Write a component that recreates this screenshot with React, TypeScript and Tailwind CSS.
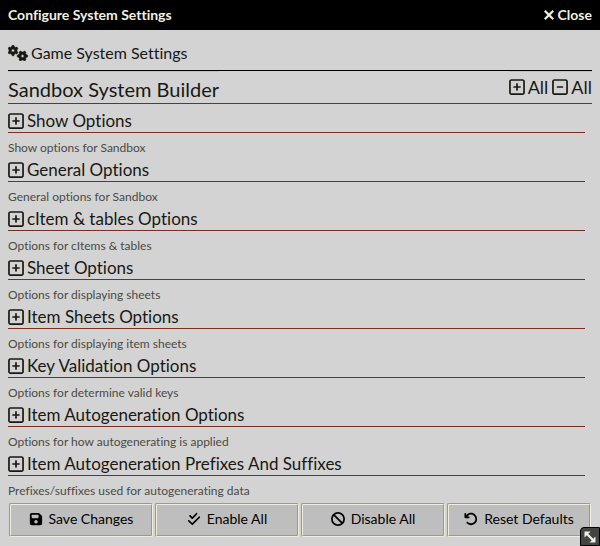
import React from "react";
import {
  FaArrowRotateLeft,
  FaBan,
  FaCheckDouble,
  FaFloppyDisk,
  FaGears,
  FaRegSquareMinus,
  FaRegSquarePlus,
  FaXmark,
} from "react-icons/fa6";

const sections = [
  { title: "Show Options", hint: "Show options for Sandbox" },
  { title: "General Options", hint: "General options for Sandbox" },
  { title: "cItem & tables Options", hint: "Options for cItems & tables" },
  { title: "Sheet Options", hint: "Options for displaying sheets" },
  { title: "Item Sheets Options", hint: "Options for displaying item sheets" },
  { title: "Key Validation Options", hint: "Options for determine valid keys" },
  { title: "Item Autogeneration Options", hint: "Options for how autogenerating is applied" },
  { title: "Item Autogeneration Prefixes And Suffixes", hint: "Prefixes/suffixes used for autogenerating data" },
];

const actions = [
  { label: "Save Changes", Icon: FaFloppyDisk },
  { label: "Enable All", Icon: FaCheckDouble },
  { label: "Disable All", Icon: FaBan },
  { label: "Reset Defaults", Icon: FaArrowRotateLeft },
];

export default function App() {
  return (
    <div className="relative flex min-h-screen flex-col bg-[#d3d3d3] font-['Lato',sans-serif] text-[#191813] [font-variant-ligatures:none]">
      <header className="flex h-[30px] items-center justify-between bg-black px-2 text-sm font-bold text-[#f0f0e0]">
        <h1>Configure System Settings</h1>
        <button type="button" className="flex items-center gap-0.5">
          <FaXmark className="size-3.5 stroke-current stroke-[30]" />
          Close
        </button>
      </header>

      <main className="flex flex-col px-2 pt-2">
        <h2 className="flex h-[33px] items-center gap-[3px] border-b border-black pb-0.5 text-base">
          <FaGears className="h-4 w-5 stroke-current stroke-[16]" />
          Game System Settings
        </h2>

        <div className="flex h-[33px] justify-between border-b border-[#782e22]">
          <h2 className="border-t border-[#c6c0b9] pt-[3px] text-xl">Sandbox System Builder</h2>
          <div className="flex gap-1 border-t border-[#c6c0b9] pb-0.5 text-lg">
            <button type="button" className="flex items-center gap-[3px]">
              <FaRegSquarePlus className="h-[18px] w-4" />
              All
            </button>
            <button type="button" className="flex items-center gap-[3px]">
              <FaRegSquareMinus className="h-[18px] w-4" />
              All
            </button>
          </div>
        </div>

        <div className="pt-1 pr-[7px]">
          {sections.map(({ title, hint }) => (
            <section key={title}>
              <h3 className="border-b border-[#782e22]">
                <button type="button" className="flex h-6 w-full items-center gap-[3px] pt-0.5 text-[17px] leading-5">
                  <FaRegSquarePlus className="h-[18px] w-4" />
                  {title}
                </button>
              </h3>
              <p className="h-6 pt-[7px] text-xs leading-4 text-[#4b4a44]">{hint}</p>
            </section>
          ))}
        </div>

        <footer className="grid grid-cols-4 gap-0.5 px-px pt-[3px]">
          {actions.map(({ label, Icon }) => (
            <button
              key={label}
              type="button"
              className="flex h-[34px] items-center justify-center gap-1.5 rounded-xs border-2 border-[#eeede0] bg-[#bebebe] pb-0.5 text-sm text-black [border-style:groove]"
            >
              <Icon />
              {label}
            </button>
          ))}
        </footer>
      </main>

      <button
        type="button"
        aria-label="Resize window"
        className="absolute right-0 bottom-0 flex h-[19px] w-5 items-center justify-center rounded-tl border border-black bg-[#444] text-[#f0f0e0]"
      >
        <svg viewBox="0 0 12 12" className="size-3" fill="currentColor" aria-hidden="true">
          <path d="M0.5 0.5h6l-6 6zM11.5 11.5h-6l6-6z" />
          <path d="M3 3l6 6" stroke="currentColor" strokeWidth="2.2" />
        </svg>
      </button>
    </div>
  );
}
